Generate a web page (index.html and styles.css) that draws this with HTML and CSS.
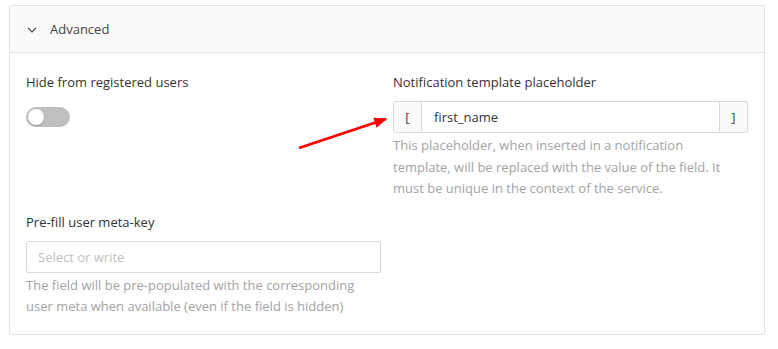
FILE: index.html
```html
<!DOCTYPE html>
<html lang="en">
<head>
  <meta charset="UTF-8">
  <meta name="viewport" content="width=device-width, initial-scale=1.0">
  <title>Advanced field settings</title>
  <link rel="stylesheet" href="styles.css">
</head>
<body>
<div class="panel">
  <div class="panel-header">
    <svg class="chevron" width="10" height="6" viewBox="0 0 10 6">
      <polyline points="1,0.8 5,5 9,0.8" fill="none" stroke="#444" stroke-width="1.2" />
    </svg>
    <span>Advanced</span>
  </div>
  <div class="panel-body">
    <div class="field">
      <div class="field-label">Hide from registered users</div>
      <div class="switch"><span class="switch-knob"></span></div>
    </div>
    <div class="field">
      <div class="field-label">Notification template placeholder</div>
      <div class="input-group">
        <span class="addon">[</span>
        <span class="input-value">first_name</span>
        <span class="addon">]</span>
      </div>
      <div class="help">This placeholder, when inserted in a notification template, will be replaced with the value of the field. It must be unique in the context of the service.</div>
    </div>
    <div class="field">
      <div class="field-label">Pre-fill user meta-key</div>
      <div class="text-input">Select or write</div>
      <div class="help">The field will be pre-populated with the corresponding user meta when available (even if the field is hidden)</div>
    </div>
  </div>
  <!-- annotation arrow -->
  <svg class="annotation" width="778" height="349">
    <defs>
      <marker id="arrowhead" markerWidth="5" markerHeight="4" refX="4.5" refY="2" orient="auto">
        <polygon points="0 0, 5 2, 0 4" fill="#f00" />
      </marker>
    </defs>
    <line x1="299" y1="148" x2="386" y2="119" stroke="#f00" stroke-width="2.6" marker-end="url(#arrowhead)" />
  </svg>
</div>
</body>
</html>
```

FILE: styles.css
```css
body {
  margin: 0;
  padding: 5px 13px 0 9px;
  font-family: 'Open Sans', 'Segoe UI', Arial, sans-serif;
  font-size: 13px;
  color: #333;
  background: #fff;
}
.panel {
  border: 1px solid #e3e3e3;
  border-radius: 2px;
}
.panel-header {
  height: 46px;
  display: flex;
  align-items: center;
  background: #fafafa;
  border-bottom: 1px solid #e3e3e3;
  padding-left: 17px;
  font-size: 13px;
  color: #444;
}
.chevron {
  margin-right: 13px;
  margin-top: 1px;
}
.panel-body {
  display: grid;
  grid-template-columns: 355px 355px;
  column-gap: 12px;
  row-gap: 12px;
  padding: 19px 16px 16px 16px;
}
.field-label {
  line-height: 20px;
  margin-bottom: 9px;
  color: #333;
}
.switch {
  width: 44px;
  height: 20px;
  border-radius: 10px;
  background: #bfbfbf;
  margin-top: 15px;
  position: relative;
}
.switch-knob {
  position: absolute;
  top: 2px;
  left: 2px;
  width: 16px;
  height: 16px;
  border-radius: 50%;
  background: #fff;
  box-shadow: 0 1px 2px rgba(0,0,0,0.2);
}
.input-group {
  display: flex;
  height: 30px;
  border: 1px solid #d9d9d9;
  border-radius: 2px;
  line-height: 30px;
}
.addon {
  width: 27px;
  text-align: center;
  background: #fafafa;
  color: #444;
}
.addon:first-child { border-right: 1px solid #d9d9d9; }
.addon:last-child { border-left: 1px solid #d9d9d9; }
.input-value {
  flex: 1;
  padding-left: 12px;
  color: #333;
}
.text-input {
  height: 30px;
  line-height: 30px;
  border: 1px solid #d9d9d9;
  border-radius: 2px;
  padding-left: 11px;
  color: #bfbfbf;
}
.help {
  max-width: 345px;
  margin-top: 2px;
  line-height: 21.5px;
  color: #a3a3a3;
}
.annotation {
  position: absolute;
  left: 0;
  top: 0;
  pointer-events: none;
}
```
